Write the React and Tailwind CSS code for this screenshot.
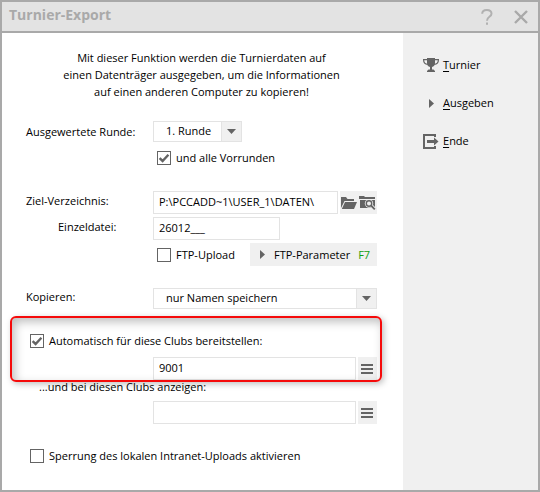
import { useState } from "react";

function CheckBox({ label, defaultChecked }) {
  const [checked, setChecked] = useState(Boolean(defaultChecked));

  return (
    <label className="flex h-5 items-center gap-[5px]">
      <span className="grid shrink-0">
        <input
          type="checkbox"
          checked={checked}
          onChange={(e) => setChecked(e.target.checked)}
          className="col-start-1 row-start-1 size-[14px] appearance-none border border-[#646464] bg-white"
        />
        {checked && (
          <svg
            viewBox="0 0 14 14"
            className="pointer-events-none col-start-1 row-start-1 size-[14px]"
          >
            <path d="M2.6 7.2 L5.6 10 L11.4 3.8" fill="none" stroke="#646464" strokeWidth="2.4" />
          </svg>
        )}
      </span>
      {label}
    </label>
  );
}

function SelectBox({ id, options, className }) {
  return (
    <div className={`flex h-[21px] border border-[#e3e3e3] ${className}`}>
      <div className="relative flex-1">
        <select id={id} className="h-full w-full appearance-none bg-white pr-6 pb-[2px] pl-3 outline-none">
          {options.map((o) => (
            <option key={o}>{o}</option>
          ))}
        </select>
        {/* Pfeil */}
        <span className="pointer-events-none absolute inset-y-0 right-0 flex w-5 items-center justify-center border-l border-[#e3e3e3] bg-[#f0f0f0]">
          <svg viewBox="0 0 9 5" className="h-[5px] w-[9px]">
            <path d="M0 0h9L4.500 5z" fill="#646464" />
          </svg>
        </span>
      </div>
    </div>
  );
}

function TextBox({ className, ...props }) {
  return (
    <input
      type="text"
      className={`h-[23px] min-w-0 border border-[#e3e3e3] bg-white px-[5px] pb-[3px] outline-none ${className}`}
      {...props}
    />
  );
}

function ListButton({ label }) {
  return (
    <button type="button" aria-label={label} className="flex h-[23px] w-[19px] items-center bg-[#f0f0f0] pl-[3px]">
      <svg viewBox="0 0 12 10" className="h-[10px] w-3" fill="#646464">
        <path d="M0 0h12v2H0zM0 4h12v2H0zM0 8h12v2H0z" />
      </svg>
    </button>
  );
}

function Triangle() {
  return (
    <svg viewBox="0 0 5 9" className="h-[9px] w-[5px]">
      <path d="M0 0L5 4.5L0 9z" fill="#646464" />
    </svg>
  );
}

function TrophyIcon() {
  return (
    <svg viewBox="0 0 16 14" className="h-[14px] w-4">
      <path d="M4 0h8v5c0 2.200-1.200 3.600-3 4v2.500h1.500L12 13v1H4v-1l1.500-1.500H7V9C5.200 8.600 4 7.200 4 5z" fill="#646464" />
      <path d="M4 1.700H.6C.6 4.600 2 6.200 4.800 6.400M12 1.700h3.400c0 2.900-1.400 4.500-4.200 4.700" fill="none" stroke="#646464" strokeWidth="1.200" />
    </svg>
  );
}

function ExitIcon() {
  return (
    <svg viewBox="0 0 16 15" className="h-[15px] w-4">
      <path d="M12 3V1H1v13h11v-2" fill="none" stroke="#646464" strokeWidth="2" />
      <path d="M4 6h7V3.500L15.500 7.500L11 11.500V9H4z" fill="#646464" />
    </svg>
  );
}

function FolderIcon() {
  return (
    <svg viewBox="0 0 16 14" className="h-[14px] w-4" fill="#646464">
      <path d="M0 12V1h5l1.500 2H13v2H3.500z" />
      <path d="M4 6h12l-3 7H.8z" />
    </svg>
  );
}

function FolderSearchIcon() {
  return (
    <svg viewBox="0 0 17 15" className="h-[15px] w-[17px]">
      <path d="M0 1h5l1 1h10v2H0z" fill="#646464" />
      <path d="M1 5h15v8H1z" fill="#646464" />
      <circle cx="10" cy="8.500" r="4.200" fill="#f0f0f0" />
      <path d="M12 10.500L16 14.500" stroke="#f0f0f0" strokeWidth="3.500" />
      <circle cx="10" cy="8.500" r="2.700" fill="none" stroke="#646464" strokeWidth="1.400" />
      <path d="M12 10.500L15.800 14.300" stroke="#646464" strokeWidth="1.800" />
    </svg>
  );
}

const actions = [
  { key: "T", rest: "urnier", icon: <TrophyIcon /> },
  { key: "A", rest: "usgeben", icon: <Triangle /> },
  { key: "E", rest: "nde", icon: <ExitIcon /> },
];

export default function App() {
  return (
    <div className="flex min-h-screen flex-col border-2 border-[#a9a9a9] bg-white font-['Open_Sans',sans-serif] text-[11px] leading-[14px] text-black">
      {/* Titelleiste */}
      <header className="flex h-[31px] items-center justify-between border-b-2 border-[#a9a9a9] bg-[#e3e3e3] pr-[10px] pl-[7px] text-[#a9a9a9]">
        <h1 className="pb-1 text-[14px] leading-5 font-bold">Turnier-Export</h1>
        <div className="flex items-center gap-[21px]">
          <button type="button" aria-label="Hilfe">
            <svg viewBox="0 0 12 16" className="h-4 w-3">
              <path d="M1.200 4.800C1.200 2.400 3 1 5.800 1s4.700 1.400 4.700 3.700c0 3.300-4.500 3-4.500 7" fill="none" stroke="#b1b1b1" strokeWidth="2" />
              <path d="M5 13.500h2v2.200H5z" fill="#b1b1b1" />
            </svg>
          </button>
          <button type="button" aria-label="Schließen">
            <svg viewBox="0 0 14 14" className="size-[14px]">
              <path d="M1 1l12 12M13 1L1 13" stroke="#a9a9a9" strokeWidth="2.400" />
            </svg>
          </button>
        </div>
      </header>

      <div className="flex flex-1">
        <main className="flex-1 pt-4 pr-[26px] pb-6 pl-6">
          <p className="text-center leading-[17px]">
            Mit dieser Funktion werden die Turnierdaten auf
            <br />
            einen Datenträger ausgegeben, um die Informationen
            <br />
            auf einen anderen Computer zu kopieren!
          </p>

          {/* Runde */}
          <div className="mt-[21px] flex items-center">
            <label htmlFor="runde" className="w-[127px]">Ausgewertete Runde:</label>
            <SelectBox id="runde" options={["1. Runde", "2. Runde"]} className="w-[89px]" />
          </div>
          <div className="mt-[6px] pl-[131px]">
            <CheckBox label="und alle Vorrunden" defaultChecked />
          </div>

          {/* Ziel */}
          <div className="mt-[23px] flex items-center">
            <label htmlFor="ziel" className="w-[127px] pb-[3px]">Ziel-Verzeichnis:</label>
            <TextBox id="ziel" defaultValue="P:\PCCADD~1\USER_1\DATEN\" className="flex-1" />
            <div className="ml-[2px] flex h-[23px] items-center gap-[2px] bg-[#f0f0f0] px-[1px]">
              <button type="button" aria-label="Ordner öffnen"><FolderIcon /></button>
              <button type="button" aria-label="Ordner durchsuchen"><FolderSearchIcon /></button>
            </div>
          </div>
          <div className="mt-[3px] flex items-center">
            <label htmlFor="datei" className="w-[127px] pb-[3px] pl-8">Einzeldatei:</label>
            <TextBox id="datei" defaultValue="26012___" className="w-[127px]" />
          </div>
          <div className="mt-[3px] flex items-center justify-between pl-[131px]">
            <CheckBox label="FTP-Upload" />
            <button type="button" className="flex h-[23px] w-[127px] items-center bg-[#f0f0f0] pl-[10px]">
              <Triangle />
              <span className="ml-[9px]">FTP-Parameter</span>
              <span className="ml-2 text-[#10a010]">F7</span>
            </button>
          </div>

          <div className="mt-[22px] flex items-center">
            <label htmlFor="kopieren" className="w-[127px] pb-[3px]">Kopieren:</label>
            <SelectBox id="kopieren" options={["nur Namen speichern", "alles kopieren"]} className="flex-1" />
          </div>

          {/* Clubs */}
          <div className="relative mt-[22px]">
            <div className="pl-1">
              <CheckBox label="Automatisch für diese Clubs bereitstellen:" defaultChecked />
            </div>
            <div className="mt-[6px] flex gap-[2px] pl-[127px]">
              <TextBox aria-label="Clubs bereitstellen" defaultValue="9001" className="flex-1" />
              <ListButton label="Clubs auswählen" />
            </div>
            {/* Hervorhebung */}
            <div className="pointer-events-none absolute -top-[15px] -right-[5px] -bottom-[2px] -left-4 rounded-md border-2 border-[#f50a0a] shadow-[2px_2px_6px_rgba(0,0,0,0.25),inset_3px_4px_10px_rgba(0,0,0,0.25)]" />
          </div>
          <label htmlFor="anzeigen" className="block pl-[13px]">...und bei diesen Clubs anzeigen:</label>
          <div className="mt-[7px] flex gap-[2px] pl-[127px]">
            <TextBox id="anzeigen" className="flex-1" />
            <ListButton label="Clubs auswählen" />
          </div>

          <div className="mt-[22px] pl-1">
            <CheckBox label="Sperrung des lokalen Intranet-Uploads aktivieren" />
          </div>
        </main>

        {/* Aktionen */}
        <aside className="flex w-[135px] flex-col gap-[18px] bg-[#f0f0f0] pt-[22px] pl-5">
          {actions.map((a) => (
            <button key={a.key} type="button" className="flex h-5 items-center gap-1 text-left">
              <span className="flex w-4 justify-center">{a.icon}</span>
              <span>
                <span className="underline underline-offset-2">{a.key}</span>
                {a.rest}
              </span>
            </button>
          ))}
        </aside>
      </div>
    </div>
  );
}
